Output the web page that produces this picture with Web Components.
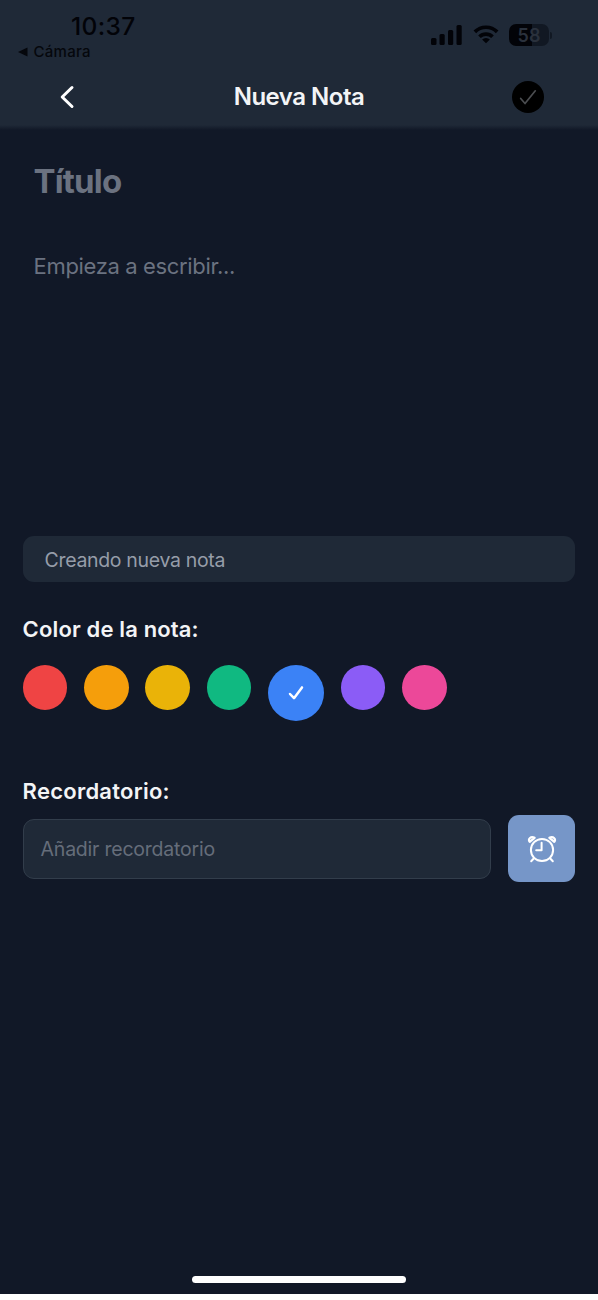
<!DOCTYPE html>
<html lang="es">
<head>
<meta charset="utf-8">
<title>Nueva Nota</title>
<style>
html,body{margin:0;background:#fff}
body{font-family:Inter,"Liberation Sans",sans-serif;color:#f3f4f6}
</style>
</head>
<body>
<note-screen></note-screen>
<script>
const define=(name,html)=>{
  const t=document.createElement('template');
  t.innerHTML=html;
  customElements.define(name,class extends HTMLElement{
    constructor(){super();this.attachShadow({mode:'open'}).append(t.content.cloneNode(true));}
  });
};

define('status-bar',`<style>
:host{display:flex;justify-content:space-between;height:64px;color:#020308}
.left{display:flex;flex-direction:column;padding:11px 0 0 18px}
.time{font-size:24.5px;line-height:30px;font-weight:500;padding-left:53px;letter-spacing:.4px}
.back{display:flex;align-items:center;gap:5.5px;font-size:15px;line-height:20px;font-weight:500;margin-top:1px;letter-spacing:.3px;color:#05070c}
.right{display:flex;align-items:flex-start;padding:24px 46px 0 0}
.signal{margin:1px 11px 0 0}.wifi{margin:0 10px 0 0}
.battery{display:flex;align-items:center;justify-content:center;width:40px;height:22px;border-radius:7px;background:linear-gradient(90deg,#020308 58%,#111823 58%);font-size:18px;font-weight:600;color:#2a313c;letter-spacing:.2px}
.cap{width:2px;height:7px;margin:8px 0 0 1px;border-radius:0 3px 3px 0;background:#111823}
</style>
<div class="left"><span class="time">10:37</span>
<span class="back"><svg width="10" height="10" viewBox="0 0 10 10"><path d="M0 5 9.5.5v9z" fill="#05070c"/></svg>Cámara</span></div>
<div class="right">
<svg class="signal" width="31" height="20" viewBox="0 0 31 20" fill="#020308"><rect y="13" width="5.5" height="7" rx="1.5"/><rect x="8.5" y="9" width="5.2" height="11" rx="1.5"/><rect x="17" y="5" width="5.2" height="15" rx="1.5"/><rect x="25.5" width="5.2" height="20" rx="1.5"/></svg>
<svg class="wifi" width="26" height="20" viewBox="0 0 28 21" fill="none" stroke="#020308" stroke-width="4"><path d="M2 8.2a17 17 0 0 1 24 0"/><path d="M7 13.5a10 10 0 0 1 14 0"/><path d="M14 20.5 9.8 16.4a6 6 0 0 1 8.4 0z" fill="#020308" stroke="none"/></svg>
<span class="battery">58</span><span class="cap"></span></div>`);

define('nav-header',`<style>
:host{display:grid;grid-template-columns:100px 1fr 100px;align-items:center;height:65px}
.title{text-align:center;font-size:24px;font-weight:600;letter-spacing:-.5px;line-height:30px;padding-top:1px}
.back{justify-self:start;margin-left:58px}
.ok{justify-self:end;margin-right:54px}
svg{display:block}
</style>
<svg class="back" width="18" height="26" viewBox="0 0 18 26"><path d="M14 3.5 4.2 13l9.8 9.5" fill="none" stroke="#fff" stroke-width="3" stroke-linecap="round" stroke-linejoin="round"/></svg>
<span class="title"><slot></slot></span>
<svg class="ok" width="32" height="32" viewBox="0 0 32 32"><circle cx="16" cy="16" r="16" fill="#000"/><path d="m8.7 17.5 4.3 5L23.3 9.8" fill="none" stroke="#4b4d50" stroke-width="1.7" stroke-linecap="round" stroke-linejoin="round"/></svg>`);

define('color-dot',`<style>
:host{display:flex;align-items:center;justify-content:center;width:44.7px;height:45px;border-radius:50%;background:var(--dot)}
:host([selected]){width:56px;height:56px}
svg{display:none}
:host([selected]) svg{display:block}
</style>
<svg width="16" height="16" viewBox="0 0 16 16"><path d="m2 9 4 4.2L14 2.4" fill="none" stroke="#fff" stroke-width="2.5" stroke-linecap="round" stroke-linejoin="round"/></svg>`);

define('color-picker',`<style>
:host{display:flex;align-items:flex-start;gap:16.7px;height:56px}
</style><slot></slot>`);

define('section-label',`<style>
:host{display:block;font-size:22px;line-height:28px;font-weight:600;letter-spacing:.15px}
</style><slot></slot>`);

define('status-note',`<style>
:host{display:flex;align-items:center;box-sizing:border-box;height:46px;padding:1px 22px 0;border-radius:11px;background:#1f2937;color:#969da9;font-size:19.5px;letter-spacing:-.33px}
</style><slot></slot>`);

define('reminder-field',`<style>
:host{display:flex;align-items:center;gap:17px}
.input{flex:1;box-sizing:border-box;height:60px;display:flex;align-items:center;padding:1px 17px 0;border:1.5px solid #323d4b;border-radius:11px;background:#1f2937;color:#656d7a;font-size:19.5px;letter-spacing:-.22px}
.alarm{display:flex;align-items:center;justify-content:center;width:67px;height:67px;border-radius:11px;background:#7696c8}
</style>
<div class="input"><slot></slot></div>
<div class="alarm"><svg width="30" height="30" viewBox="0 0 30 30" fill="none" stroke="#fff" stroke-width="2" stroke-linecap="round" stroke-linejoin="round"><circle cx="15" cy="16" r="11.1"/><path d="M14.6 8.8v7.5H9.2M7 24.3l-2.8 3M23 24.3l2.8 3"/><path d="M2.7 7.8C.7 5.2 3.8 1.7 7.6 3.8zM27.3 7.8c2-2.6-1.1-6.1-4.9-4z" stroke-width="2.2"/></svg></div>`);

define('note-screen',`<style>
:host{display:flex;flex-direction:column;width:598px;height:1294px;background:#111827}
.top{background:linear-gradient(#1f2937 0 125px,#111827 130px);height:130px}
main{flex:1;padding:0 22.6px;display:flex;flex-direction:column}
.title{font-size:33px;line-height:40px;font-weight:700;color:#6b7280;margin:31px 11px 0;letter-spacing:-.85px}
.body{font-size:22px;line-height:28px;color:#6b7280;margin:51px 11px 0;height:284.4px;letter-spacing:-.35px}
.color{margin-top:33px}
color-picker{margin-top:22px}
.reminder{margin-top:56px;letter-spacing:.25px}
reminder-field{margin-top:10px}
.home{align-self:center;width:214px;height:7px;border-radius:4px;background:#fff;margin:auto 0 11px}
</style>
<div class="top"><status-bar></status-bar><nav-header>Nueva Nota</nav-header></div>
<main>
<div class="title">Título</div>
<div class="body">Empieza a escribir...</div>
<status-note>Creando nueva nota</status-note>
<section-label class="color">Color de la nota:</section-label>
<color-picker>
<color-dot style="--dot:#ef4444"></color-dot><color-dot style="--dot:#f59e0b"></color-dot><color-dot style="--dot:#eab308"></color-dot><color-dot style="--dot:#10b981"></color-dot><color-dot selected style="--dot:#3b82f6"></color-dot><color-dot style="--dot:#8b5cf6"></color-dot><color-dot style="--dot:#ec4899"></color-dot>
</color-picker>
<section-label class="reminder">Recordatorio:</section-label>
<reminder-field>Añadir recordatorio</reminder-field>
<div class="home"></div>
</main>`);
</script>
</body>
</html>
